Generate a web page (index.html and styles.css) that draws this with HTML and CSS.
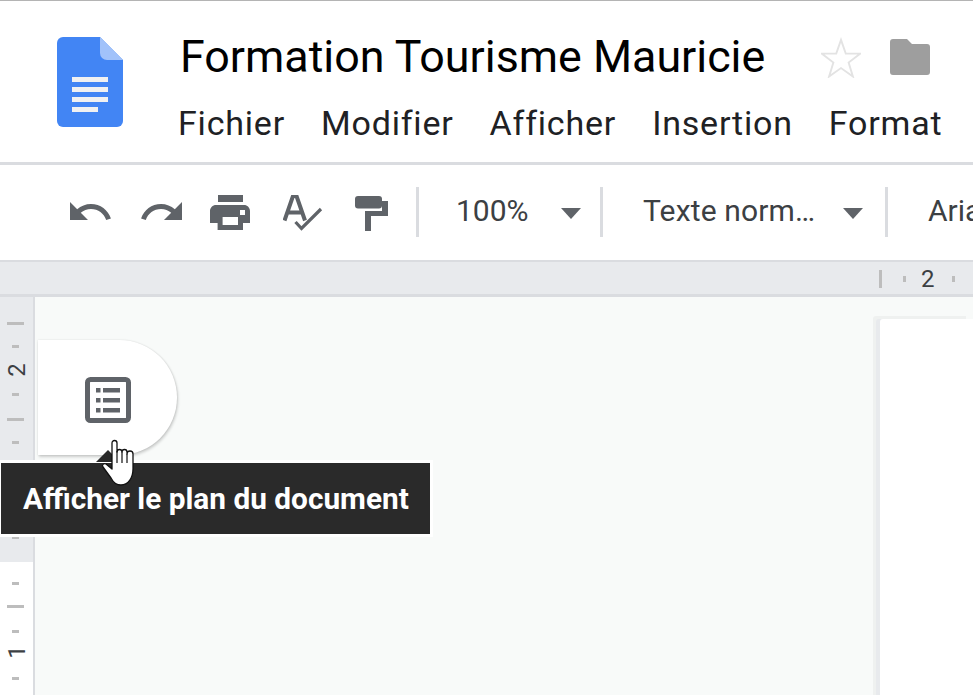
FILE: index.html
```html
<!DOCTYPE html>
<html lang="fr">
<head>
<meta charset="utf-8">
<title>Formation Tourisme Mauricie</title>
<link rel="stylesheet" href="styles.css">
</head>
<body>
<div class="app">
  <header class="header">
    <svg class="logo" viewBox="0 0 66 90" width="66" height="90">
      <path d="M6 0H43L66 23V84a6 6 0 0 1-6 6H6a6 6 0 0 1-6-6V6a6 6 0 0 1 6-6z" fill="#4285f4"/>
      <path d="M43 0L66 23H50a7 7 0 0 1-7-7z" fill="#a1c2fa"/>
      <path d="M15 40H51V45H15zM15 50H51V55H15zM15 60H51V65H15zM15 70H41V75H15z" fill="#f1f1f1"/>
    </svg>
    <div class="head-main">
      <div class="title-row">
        <span class="title">Formation Tourisme Mauricie</span>
        <svg class="star" viewBox="0 0 42 42" width="40" height="42"><path d="M21 3l5 14.500h15l-12 9.300 4.500 14.700L21 32.600 8.500 41.500 13 26.800 1 17.500H16z" fill="none" stroke="#e3e3e3" stroke-width="2"/></svg>
        <svg class="folder" viewBox="0 0 40 36" width="40" height="36"><path d="M3 0H17l5 5H37a3 3 0 0 1 3 3V33a3 3 0 0 1-3 3H3a3 3 0 0 1-3-3V3a3 3 0 0 1 3-3z" fill="#9e9e9e"/></svg>
      </div>
      <nav class="menu">
        <span>Fichier</span><span>Modifier</span><span>Afficher</span><span>Insertion</span><span>Format</span>
      </nav>
    </div>
  </header>

  <div class="toolbar">
    <svg class="ic ic-undo" viewBox="0 0 24 24"><path d="M12.500 8c-2.650 0-5.050.99-6.900 2.600L2 7v9h9l-3.620-3.620c1.390-1.160 3.160-1.880 5.120-1.880 3.540 0 6.550 2.310 7.600 5.500l2.370-.78C21.080 11.030 17.150 8 12.500 8z"/></svg>
    <svg class="ic ic-redo" viewBox="0 0 24 24"><path d="M18.400 10.600C16.550 8.990 14.150 8 11.500 8c-4.650 0-8.580 3.030-9.960 7.220L3.900 16c1.050-3.190 4.050-5.500 7.600-5.500 1.950 0 3.730.72 5.120 1.880L13 16h9V7l-3.600 3.600z"/></svg>
    <svg class="ic ic-print" viewBox="0 0 24 24"><path fill-rule="evenodd" d="M5 8.500h14c1.660 0 3 1.340 3 3V17.500h-3.500V21H5.800v-3.500H2v-6c0-1.660 1.340-3 3-3zM8.300 14.500v4h7.700v-4zM17 11v2.500h2.500V11zM6 3.500h12.500V7H6z"/></svg>
    <svg class="ic-spell" viewBox="0 0 40 38" width="40" height="38"><path d="M1.500 25.500L10 1h3.500l8.500 24.500M5 17.500h14" fill="none" stroke="#5f6368" stroke-width="4"/><path d="M12.500 27l6 6.500L38 14" fill="none" stroke="#5f6368" stroke-width="3.200"/></svg>
    <svg class="ic-paint" viewBox="0 0 34 36" width="34" height="36"><rect x="0" y="0" width="27" height="12.500" rx="3" fill="#5f6368"/><path d="M27 5H33V20H16V35H10V15H27z" fill="#5f6368"/></svg>
    <i class="sep sep-a"></i>
    <span class="tb-text zoom">100%</span>
    <i class="caret caret-a"></i>
    <i class="sep sep-b"></i>
    <span class="tb-text style">Texte norm…</span>
    <i class="caret caret-b"></i>
    <i class="sep sep-c"></i>
    <span class="tb-text font">Arial</span>
  </div>

  <div class="hruler">
    <i class="h-tick big"></i><i class="h-tick"></i><span class="h-num">2</span><i class="h-tick"></i>
  </div>

  <main class="work">
    <aside class="vruler">
      <div class="v-top">
        <i class="v-tick big"></i><i class="v-tick"></i><span class="v-num">2</span><i class="v-tick"></i><i class="v-tick big"></i><i class="v-tick"></i><i class="v-tick last"></i>
      </div>
      <div class="v-bottom">
        <i class="v-tick"></i><i class="v-tick big"></i><i class="v-tick"></i><span class="v-num one">1</span><i class="v-tick"></i>
      </div>
    </aside>
    <div class="canvas">
      <div class="page"></div>
    </div>

    <div class="outline-pill">
      <svg viewBox="0 0 46 46" width="46" height="46">
        <rect x="2.500" y="2.500" width="41" height="41" rx="3" fill="none" stroke="#5f6368" stroke-width="5"/>
        <path d="M11 11h4.500v4.500H11zM18 11h17v4.500H18zM11 21h4.500v4.500H11zM18 21h17v4.500H18zM11 31h4.500v4.500H11zM18 31h17v4.500H18z" fill="#5f6368"/>
      </svg>
    </div>
    <div class="tooltip">Afficher le plan du document</div>
    <div class="tip-arrow"></div>
    <svg class="hand" viewBox="-1 -1 34 48" width="34" height="48">
      <path d="M10 3a2.500 2.500 0 0 1 5 0V12a2.500 2.500 0 0 1 5 0 2.500 2.500 0 0 1 5 0V14a2.800 2.800 0 0 1 6 0V29c0 9-5 16-12 16-5 0-8-3-10-7L1 27c-1.500-2 .5-4 3-3l6 5z" fill="#fff" stroke="#111" stroke-width="1.300" stroke-linejoin="round"/>
      <path d="M15 11V23M20 12V23M25 14V23" fill="none" stroke="#111" stroke-width="1.200"/>
    </svg>
  </main>
</div>
</body>
</html>
```

FILE: styles.css
```css
* { box-sizing: border-box; }
html, body { margin: 0; padding: 0; background: #fff; }
body { width: 973px; height: 695px; overflow: hidden; font-family: Roboto, "Liberation Sans", sans-serif; }
.app { display: flex; flex-direction: column; width: 973px; height: 695px; overflow: hidden; }

.header { display: flex; height: 165px; flex: none; border-top: 1px solid #b4b4b4; border-bottom: 3px solid #dadce0; padding: 36px 0 0 57px; }
.logo { flex: none; display: block; }
.head-main { margin-left: 55px; margin-top: -4px; white-space: nowrap; flex: none; }
.title-row { display: flex; align-items: center; height: 48px; padding-left: 2px; }
.title { font-size: 44.800px; color: #000; line-height: 48px; }
.star { margin-left: 56px; flex: none; }
.folder { margin-left: 29px; flex: none; }
.menu { display: flex; gap: 36px; margin-top: 20px; font-size: 34px; line-height: 44px; color: #202124; letter-spacing: .8px; }

.toolbar { display: flex; align-items: center; height: 97px; flex: none; border-bottom: 2px solid #dadce0; padding-left: 66px; padding-bottom: 2px; white-space: nowrap; color: #3c4043; }
.ic { width: 48px; height: 48px; flex: none; fill: #5f6368; }
.ic-redo { margin-left: 24px; }
.ic-print { margin-left: 20px; }
.ic-spell { margin-left: 29px; margin-top: 4px; flex: none; }
.ic-paint { margin-left: 32px; margin-top: 5px; flex: none; }
.sep { flex: none; width: 3px; height: 50px; background: #dadce0; }
.sep-a { margin-left: 27px; }
.sep-b { margin-left: 19px; }
.sep-c { margin-left: 22px; }
.tb-text { font-size: 30px; flex: none; margin-bottom: 2px; }
.zoom { margin-left: 37px; width: 72px; }
.style { margin-left: 40px; width: 172px; letter-spacing: .15px; }
.font { margin-left: 40px; }
.caret { flex: none; width: 0; height: 0; border-left: 10px solid transparent; border-right: 10px solid transparent; border-top: 11px solid #5f6368; margin-top: 4px; }
.caret-a { margin-left: 33px; }
.caret-b { margin-left: 28px; }

.hruler { display: flex; align-items: center; height: 35px; flex: none; background: #e8eaed; border-bottom: 3px solid #dadce0; padding: 1px 0 0 879px; color: #3c4043; }
.h-tick { flex: none; width: 3px; height: 6px; background: #bdbdbd; margin-left: 21px; }
.h-tick.big { width: 3px; height: 18px; margin-left: 0; }
.h-num { font-size: 24px; line-height: 32px; margin: 0 19px 0 15px; width: 12px; text-align: center; }
.h-num + .h-tick { margin-left: 0; }

.work { position: relative; display: flex; flex: 1; min-height: 0; }
.vruler { flex: none; width: 35px; border-right: 2px solid #dadce0; background: #e8eaed; display: flex; flex-direction: column; justify-content: space-between; }
.v-top, .v-bottom { display: flex; flex-direction: column; align-items: center; padding-right: 2px; }
.v-top { height: 265px; padding-top: 25px; background: #e8eaed; }
.v-bottom { height: 133px; padding-top: 20px; background: #fff; }
.v-tick { display: block; flex: none; width: 7px; height: 3px; background: #bdbdbd; margin-bottom: 20px; }
.v-tick.big { width: 17px; }
.v-tick.last { margin-top: auto; margin-bottom: 23px; }
.v-num + .v-tick { margin-bottom: 22px; }
.v-bottom .v-tick.big { margin-bottom: 22px; }
.v-num { display: block; flex: none; height: 24px; width: 24px; line-height: 24px; margin: -10px 0 11px 3px; font-size: 24px; text-align: center; color: #3c4043; transform: rotate(-90deg); }
.v-num.one { margin: -13px 0 13px 3px; }
.canvas { flex: 1; background: #f8faf9; padding: 22px 0 0 845px; }
.page { width: 100%; height: 420px; background: #fff; box-shadow: -4px 0 0 #e8eaed, -7px -3px 0 #eff1f0; border-radius: 3px 0 0 0; }

.outline-pill { position: absolute; left: 38px; top: 43px; width: 139px; height: 115px; background: #fff; border-radius: 0 58px 58px 0; box-shadow: 1px 2px 3px rgba(0,0,0,.18), 0 0 2px rgba(0,0,0,.12); display: flex; align-items: center; padding: 4px 0 0 47px; }
.tip-arrow { position: absolute; left: 96px; top: 153px; width: 0; height: 0; border-left: 12px solid transparent; border-right: 12px solid transparent; border-bottom: 12px solid #2a2a2a; }
.tooltip { position: absolute; left: 1px; top: 166px; width: 429px; height: 71px; background: #2a2a2a; box-shadow: 0 0 0 3px #fff; color: #fff; font-size: 29.800px; font-weight: 700; line-height: 71px; padding-left: 22px; white-space: nowrap; }
.hand { position: absolute; left: 101px; top: 142px; }
```
